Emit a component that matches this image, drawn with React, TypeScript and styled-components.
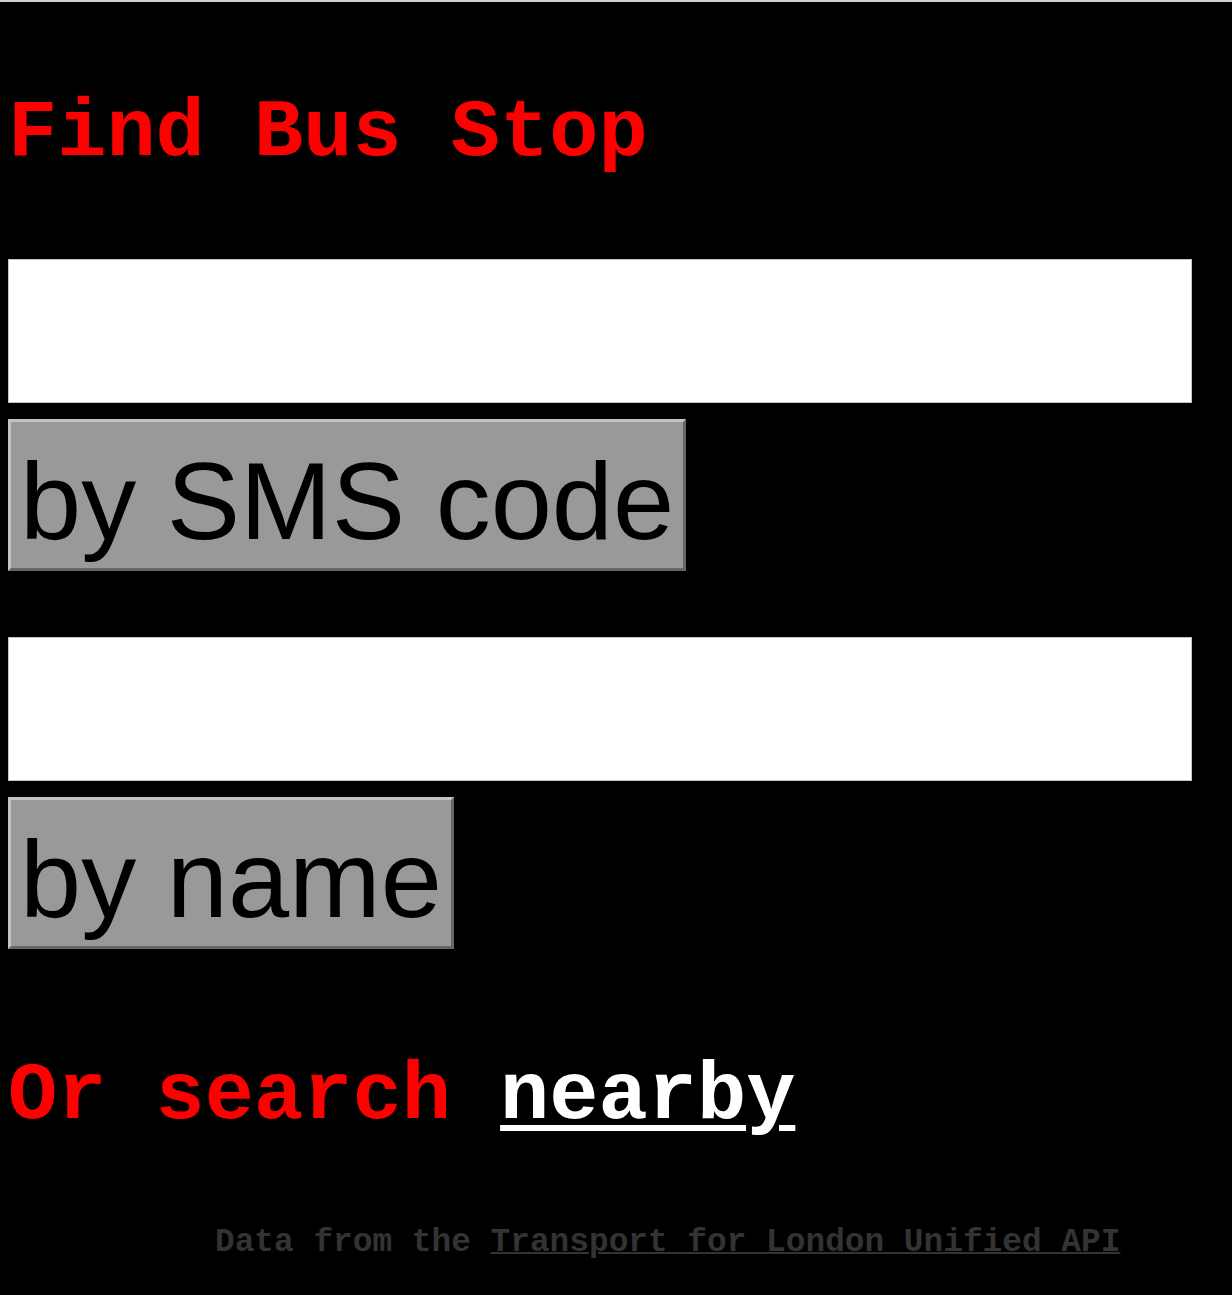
import React from "react";
import styled, { createGlobalStyle } from "styled-components";

const Global = createGlobalStyle`
  html, body { background: #000; }
  body {
    margin: 0;
    border-top: 2px solid #cfcfcf;
    font-family: "Liberation Mono", "Courier New", monospace;
  }
`;

const Page = styled.main`
  display: flex;
  flex-direction: column;
  align-items: flex-start;
  padding: 0 8px 34px;
`;

const Title = styled.h1<{ $top: number; $bottom: number }>`
  margin: ${(p) => p.$top}px 0 ${(p) => p.$bottom}px;
  font-family: "Liberation Mono", "Courier New", monospace;
  font-weight: bold;
  font-size: 82px;
  line-height: 93px;
  color: #ff0000;
  white-space: pre;
`;

const SearchForm = styled.form<{ $gapAfter: number }>`
  display: flex;
  flex-direction: column;
  align-items: flex-start;
  gap: 16px;
  margin: 0 0 ${(p) => p.$gapAfter}px;
`;

const TextField = styled.input`
  box-sizing: border-box;
  width: 1184px;
  height: 144px;
  margin: 0;
  border: 1px solid #c4c4c4;
  background: #fff;
  outline: none;
`;

const SearchButton = styled.button`
  box-sizing: border-box;
  height: 152px;
  margin: 0;
  padding: 24px 9px 12px 9px;
  border-style: solid;
  border-width: 3px;
  border-color: #c4c4c4 #666 #666 #c4c4c4;
  background: #999;
  color: #000;
  font-family: "Liberation Sans", Arial, Helvetica, sans-serif;
  font-size: 110px;
  line-height: 110px;
  white-space: nowrap;
`;

const NearbyLink = styled.a`
  color: #fff;
  text-decoration: underline;
  text-decoration-thickness: 6px;
  text-underline-offset: 7px;
`;

const Footer = styled.p`
  align-self: stretch;
  margin: 0;
  padding-left: 207px;
  font-family: "Liberation Mono", "Courier New", monospace;
  font-weight: bold;
  font-size: 32.8px;
  line-height: 36px;
  color: #333;
  white-space: pre;
`;

const FooterLink = styled.a`
  color: #333;
  text-decoration: underline;
  text-decoration-thickness: 2px;
`;

export default function App() {
  return (
    <>
      <Global />
      <Page>
        <Title $top={85} $bottom={79}>Find Bus Stop</Title>
        <SearchForm $gapAfter={66} onSubmit={(e) => e.preventDefault()}>
          <TextField type="text" aria-label="SMS code" />
          <SearchButton type="submit">by SMS code</SearchButton>
        </SearchForm>
        <SearchForm $gapAfter={101} onSubmit={(e) => e.preventDefault()}>
          <TextField type="text" aria-label="Stop name" />
          <SearchButton type="submit">by name</SearchButton>
        </SearchForm>
        <Title as="h2" $top={0} $bottom={82}>
          Or search <NearbyLink href="#">nearby</NearbyLink>
        </Title>
        <Footer>
          Data from the <FooterLink href="#">Transport for London Unified API</FooterLink>
        </Footer>
      </Page>
    </>
  );
}
